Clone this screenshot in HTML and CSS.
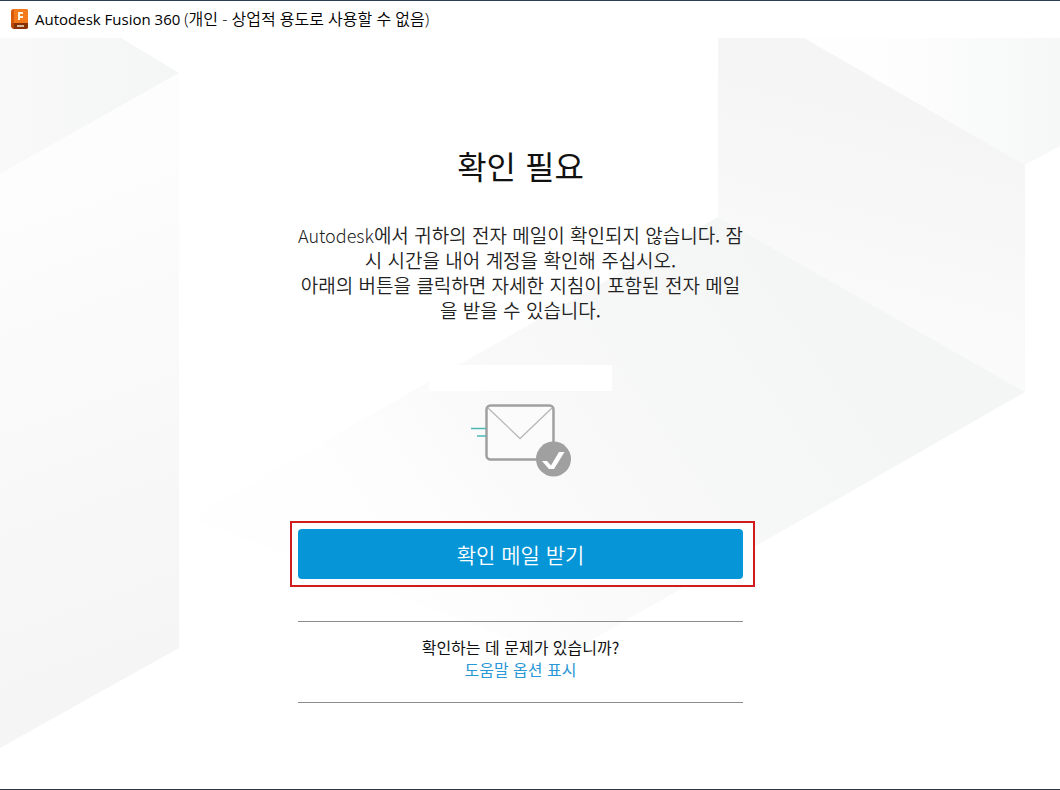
FILE: index.html
```html
<!DOCTYPE html>
<html lang="ko">
<head>
<meta charset="utf-8">
<meta name="viewport" content="width=device-width, initial-scale=1">
<title>Autodesk Fusion 360</title>
<link rel="stylesheet" href="styles.css">
</head>
<body>
<div class="window">
  <header class="titlebar">
    <svg class="app-icon" viewBox="0 0 20 22" aria-hidden="true">
      <path d="M3 1h13l2 1v18l-2 1H3l-2-2V3z" fill="#b94a0c"/>
      <path d="M3 1h13l2 1v13H1V3z" fill="#f47a1c"/>
      <path d="M1 3l3-2v14H1z" fill="#d85b0c"/>
      <path d="M4 15h14v5l-2 1H4z" fill="#873307"/>
      <path d="M8 4h5v2h-3v2h3v2h-3v2H8z" fill="#fff3e5"/>
      <path d="M7 17h7v2H7z" fill="#d9b9a0"/>
    </svg>
    <span class="titlebar-text">Autodesk Fusion 360 <span class="titlebar-note">(개인 - 상업적 용도로 사용할 수 없음)</span></span>
  </header>
  <main class="content">
    <svg class="backdrop" viewBox="0 0 1060 751" preserveAspectRatio="none" aria-hidden="true">
      <defs>
        <linearGradient id="left-top" x1="0" x2="1" y1="0" y2="0">
          <stop offset="0" stop-color="#f9f9f9"/><stop offset="1" stop-color="#f4f5f5"/>
        </linearGradient>
        <linearGradient id="left-side" gradientUnits="userSpaceOnUse" x1="20" y1="130" x2="190" y2="600">
          <stop offset="0" stop-color="#fdfdfd"/><stop offset="1" stop-color="#f5f5f5"/>
        </linearGradient>
        <linearGradient id="right-wall" gradientUnits="userSpaceOnUse" x1="880" y1="70" x2="830" y2="270">
          <stop offset="0" stop-color="#f5f5f5"/><stop offset="1" stop-color="#fafafa"/>
        </linearGradient>
        <linearGradient id="right-top" gradientUnits="userSpaceOnUse" x1="880" y1="0" x2="1060" y2="0">
          <stop offset="0" stop-color="#fefefe"/><stop offset="1" stop-color="#f6f7f7"/>
        </linearGradient>
        <linearGradient id="floor" gradientUnits="userSpaceOnUse" x1="800" y1="260" x2="400" y2="540">
          <stop offset="0" stop-color="#f4f5f5"/><stop offset="0.6" stop-color="#f9f9f9"/><stop offset="1" stop-color="#fefefe"/>
        </linearGradient>
      </defs>
      <path d="M0 0H121L179 35L0 136Z" fill="url(#left-top)"/>
      <path d="M0 136L179 35V610L0 710Z" fill="url(#left-side)"/>
      <path d="M804 0H1060V108L1025 127Z" fill="url(#right-top)"/>
      <path d="M718 0H804L1025 127V354L718 179Z" fill="url(#right-wall)"/>
      <path d="M718 179L1025 354L560 620L190 480Z" fill="url(#floor)"/>
    </svg>
    <div class="panel">
      <h1 class="heading">확인 필요</h1>
      <p class="message"><span class="brand">Autodesk</span>에서 귀하의 전자 메일이 확인되지 않습니다. 잠<br>시 시간을 내어 계정을 확인해 주십시오.<br>아래의 버튼을 클릭하면 자세한 지침이 포함된 전자 메일<br>을 받을 수 있습니다.</p>
      <div class="address"></div>
      <svg class="mail-icon" viewBox="0 0 102 74" aria-hidden="true">
        <rect x="16.500" y="1.500" width="67" height="54" rx="4" fill="#fbfbfb" stroke="#a0a0a0" stroke-width="2.5"/>
        <path d="M18 4L50 34.500L82 4" fill="none" stroke="#b8b8b8" stroke-width="1.300"/>
        <path d="M1 24.500H16M7 32H16" stroke="#4cb8b5" stroke-width="1.400"/>
        <circle cx="83.500" cy="55" r="17.500" fill="#a0a0a0"/>
        <path d="M72 57H77L81 61.500L89 48H94.500L84 65H79Z" fill="#fff"/>
      </svg>
      <div class="highlight">
        <button class="primary" type="button">확인 메일 받기</button>
      </div>
      <section class="help">
        <p class="help-text">확인하는 데 문제가 있습니까?</p>
        <a class="help-link" href="#">도움말 옵션 표시</a>
      </section>
    </div>
  </main>
</div>
</body>
</html>
```
FILE: styles.css
```css
* {
  box-sizing: border-box;
}

body {
  margin: 0;
  background: #fff;
  color: #111;
  font-family: "Noto Sans CJK KR", sans-serif;
}

.window {
  display: flex;
  flex-direction: column;
  min-height: 100vh;
  border-top: 1px solid #2b3d55;
  border-bottom: 1px solid #2f3846;
}

.titlebar {
  display: flex;
  align-items: center;
  gap: 5px;
  height: 37px;
  padding: 0 0 2px 10px;
  background: #fff;
}

.app-icon {
  width: 20px;
  height: 22px;
}

.titlebar-text {
  color: #000;
  font-family: "Open Sans", "Noto Sans CJK KR", sans-serif;
  font-size: 15px;
  line-height: 24px;
  white-space: nowrap;
}

.titlebar-note {
  font-size: 16px;
  font-weight: 350;
}

.content {
  position: relative;
  flex: 1;
  display: flex;
  justify-content: center;
  padding: 103px 19px 40px 0;
}

.backdrop {
  position: absolute;
  inset: 0;
  width: 100%;
  height: 100%;
}

.panel {
  position: relative;
  display: flex;
  flex-direction: column;
  align-items: center;
  width: 445px;
  text-align: center;
}

.heading {
  margin: 0;
  font-size: 32px;
  font-weight: 400;
  line-height: 48px;
}

.message {
  margin: 33px 0 0;
  color: #222;
  font-size: 19px;
  font-weight: 350;
  line-height: 25px;
  white-space: nowrap;
}

.brand {
  font-size: 18px;
  font-weight: 300;
  line-height: 1;
}

.address {
  width: 183px;
  height: 26px;
  margin-top: 43px;
  background: #fff;
}

.mail-icon {
  width: 102px;
  height: 74px;
  margin-top: 13px;
}

.highlight {
  align-self: stretch;
  margin: 43px -12px 0 -8px;
  padding: 6px 10px 6px 6px;
  border: 2px solid #d01c1f;
  background: #fdfdfd;
}

.primary {
  display: block;
  width: 100%;
  height: 50px;
  padding: 0;
  border: 0;
  border-radius: 4px;
  background: #0696d7;
  color: #fff;
  font-family: inherit;
  font-size: 21px;
  font-weight: 350;
  line-height: 50px;
}

.help {
  align-self: stretch;
  margin-top: 34px;
  padding: 14px 0 22px;
  border-top: 1px solid #8c8c8c;
  border-bottom: 1px solid #8c8c8c;
  font-size: 16px;
  line-height: 22px;
}

.help-text {
  margin: 0;
}

.help-link {
  display: block;
  color: #2a98d5;
  text-decoration: none;
}
```
